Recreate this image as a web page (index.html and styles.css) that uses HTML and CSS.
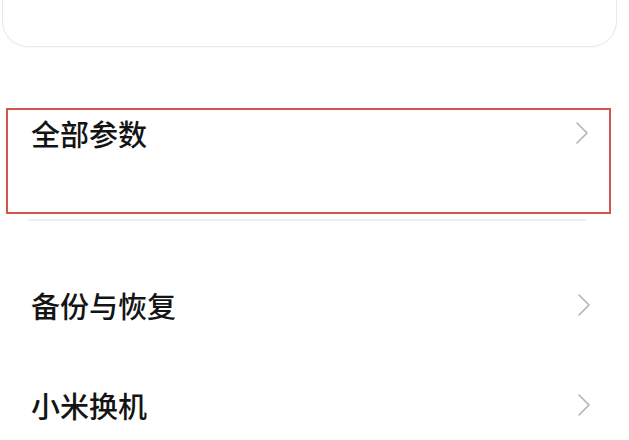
FILE: index.html
```html
<!DOCTYPE html>
<html lang="zh-CN">
  <head>
    <meta charset="UTF-8" />
    <meta name="viewport" content="width=device-width, initial-scale=1.0" />
    <title>我的设备</title>
    <link rel="stylesheet" href="styles.css">
  </head>
  <body>
    <div class="page">
      <div class="card_top"></div>

      <div class="highlight">
        <div class="row row_top">
          <span class="label">全部参数</span>
          <svg class="arrow" width="14" height="24" viewBox="0 0 14 24">
            <polyline points="2,2 12,12 2,22" />
          </svg>
        </div>
      </div>

      <div class="divider"></div>

      <div class="row">
        <span class="label">备份与恢复</span>
        <svg class="arrow" width="14" height="24" viewBox="0 0 14 24">
          <polyline points="2,2 12,12 2,22" />
        </svg>
      </div>
      <div class="row">
        <span class="label">小米换机</span>
        <svg class="arrow" width="14" height="24" viewBox="0 0 14 24">
          <polyline points="2,2 12,12 2,22" />
        </svg>
      </div>
    </div>
  </body>
</html>
```

FILE: styles.css
```css
html,
body {
  margin: 0;
  background-color: #ffffff;
}
.page {
  width: 629px;
  height: 440px;
  overflow: hidden;
  font-family: "Noto Sans CJK SC", "Noto Sans", sans-serif;
  color: #141414;
}
.card_top {
  margin: -60px 0 0 2px;
  width: 613px;
  height: 105px;
  border: 1px solid #e8e8e8;
  border-radius: 26px;
  box-shadow: 0 1px 2px rgba(0, 0, 0, 0.03);
}
.highlight {
  margin: 61px 0 0 6px;
  width: 601px;
  height: 99px;
  padding-top: 3px;
  box-sizing: content-box;
  border: 2px solid #d4544e;
}
.row {
  display: flex;
  justify-content: space-between;
  align-items: center;
  height: 100px;
  padding: 0 38px 0 31px;
}
.row_top {
  height: 40px;
  padding: 0 20px 0 23px;
}
.label {
  font-size: 29px;
  line-height: 40px;
  font-weight: 500;
}
.arrow polyline {
  fill: none;
  stroke: #b3b3b3;
  stroke-width: 1.6;
  stroke-linecap: round;
  stroke-linejoin: round;
}
.divider {
  margin: 5px 0 0 28px;
  width: 558px;
  height: 2px;
  background-color: #eeeeee;
}
.divider + .row {
  margin-top: 34px;
}
```
